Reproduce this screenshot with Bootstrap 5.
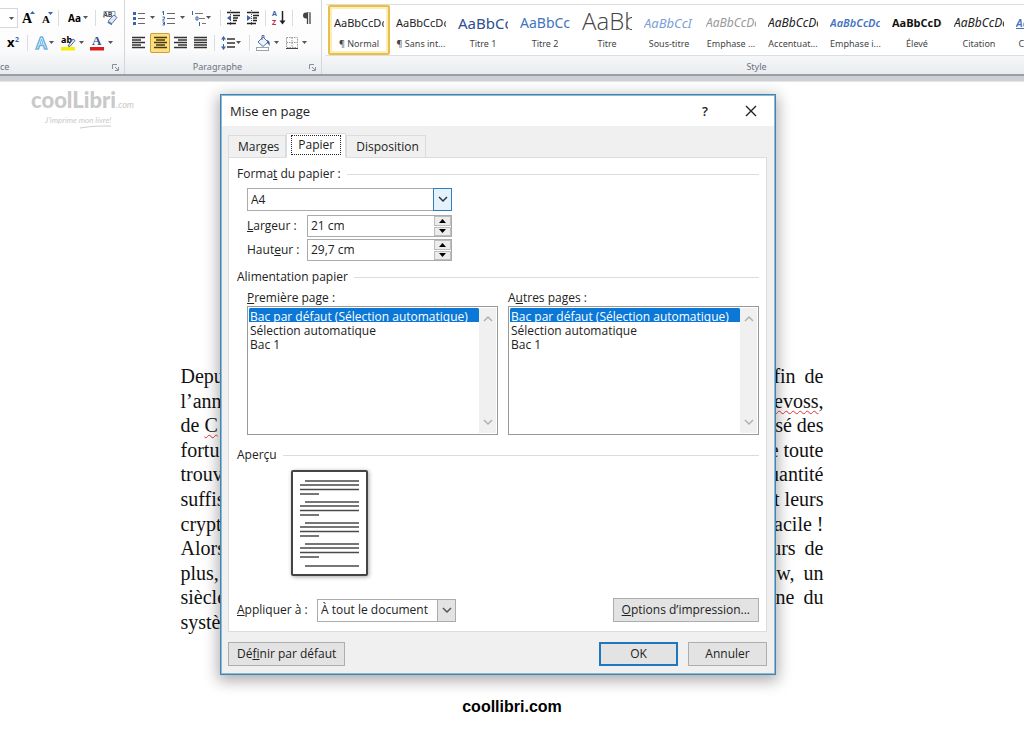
<!DOCTYPE html>
<html lang="fr">
<head>
<meta charset="utf-8">
<meta name="viewport" content="width=device-width, initial-scale=1">
<title>Mise en page</title>
<link href="https://cdn.jsdelivr.net/npm/bootstrap@5.3.0/dist/css/bootstrap.min.css" rel="stylesheet">
<style>
  body { font: 12px/16px "Noto Sans", "Open Sans", sans-serif; color: #222; background: #fff; }
  button, input, select { font: inherit; color: inherit; }

  /* Ribbon */
  .ribbon { background: linear-gradient(#fff 0, #fbfbfc 50px, #e9ebee); border-bottom: 2px solid #9b9fa5; box-shadow: 0 5px 0 #cdd1d6, 0 6px 0 #e4e6e8; }
  .rgroup { border-right: 1px solid #d3d6da; padding: 8px 5px 0 5px; }
  .rgroup.cut { padding-left: 0; width: 125px; }
  .rgroup.para { width: 197px; }
  .tools { height: 20px; gap: 4px; }
  .tools + .tools { margin-top: 5px; }
  .tool { padding: 0; border: 0; background: none; line-height: 0; flex: none; }
  .tool svg, .mini { display: block; }
  .tool.active { background: #ffdf7c; box-shadow: inset 0 0 0 1px #c9a03f; border-radius: 2px; }
  .rule-v { width: 1px; height: 16px; background: #d9dce0; flex: none; }
  .fontbox { width: 18px; height: 20px; border: 1px solid #d5d8dc; border-left: 0; background: #fff; }
  .glabel { font-size: 9px; line-height: 14px; color: #6b7280; margin-top: 7px; }
  .glabel.styles { padding-left: 163px; }
  .gallery { border-top: 1px solid #dcdee1; border-bottom: 1px solid #dcdee1; background: #fff; margin-top: 4px; padding-left: 2px; height: 52px; }
  .tile { width: 62px; height: 50px; padding: 0 4px; border: 2px solid transparent; background: none; flex: none; }
  .tile.active { border-color: #e8bf4a; border-radius: 2px; box-shadow: inset 0 0 0 2px #fdeeb5; }
  .tile .sample { display: block; height: 26px; line-height: 28px; font-size: 11px; overflow: hidden; white-space: nowrap; text-align: left; color: #222; }
  .tile .cap { display: block; font-size: 9px; line-height: 17px; white-space: nowrap; color: #444; }
  .tile .s-h1 { font-size: 15px; color: #2f4f8f; }
  .tile .s-h2 { font-size: 14px; color: #4374c0; }
  .tile .s-title { font-size: 24px; font-weight: 300; font-family: "Open Sans", sans-serif; color: #444; line-height: 24px; }
  .tile .s-sub { font-size: 13px; font-style: italic; color: #7ba0d6; }
  .tile .s-it { font-size: 12px; font-style: italic; }
  .tile .s-pale { font-size: 12px; font-style: italic; color: #999; }
  .tile .s-int { font-style: italic; font-weight: 600; color: #4374c0; }
  .tile .s-strong { font-size: 11px; font-weight: 700; font-family: "Open Sans", sans-serif; color: #111; }

  /* Document, logo and dialog share one grid cell */
  .stage { display: grid; margin-top: 5px; }
  .stage > * { grid-area: 1 / 1; }
  .brand { padding: 8px 0 0 31px; color: #c9c9c9; line-height: 22px; align-self: start; justify-self: start; }
  .brand .name { font: 900 22px/22px Lato, sans-serif; }
  .brand .com { font: italic 9px/10px Lato, sans-serif; }
  .brand .tag { font: italic 8px/10px Lato, sans-serif; padding-left: 14px; }
  .brand svg { margin-left: 48px; }
  .doc { width: min(643px, 100%); height: 270px; margin: 283px 20px 0 0; justify-self: center; font: 20px/24px "Liberation Serif", serif; color: #111; }
  .doc .typo { text-decoration: underline wavy #d33 1px; text-underline-offset: 2px; }
  .doc .wide { gap: 9px; }

  .dlg { font-family: "Open Sans", "Noto Sans", sans-serif; width: min(556px, 100%); margin: 13px 28px 0 0; justify-self: center; background: #f0f0f0; border: 1px solid #3f87b0; outline: 1px solid #8fb9d2; outline-offset: -2px; box-shadow: 0 4px 14px 2px rgba(0,0,0,.32); position: relative; }
  .dlg-title { background: #fff; margin: 1px; height: 30px; padding: 0 16px 0 8px; font-size: 13px; }
  .dlg-title button { border: 0; background: none; padding: 0; width: 14px; height: 16px; font-weight: 600; line-height: 16px; }
  .dlg-body { padding: 6px 8px 8px 7px; }
  .dlg .nav-tabs { border: 0; align-items: flex-end; margin-bottom: -1px; position: relative; }
  .dlg .nav-tabs .nav-link { border: 1px solid #dcdcdc; border-radius: 0; color: inherit; background: #f0f0f0; padding: 2px 6px 2px 9px; margin: 0; line-height: 17px; }
  .dlg .nav-tabs .nav-link.active { background: #fff; border-bottom-color: #fff; padding: 2px 5px 3px; }
  .dlg .nav-tabs .nav-link.active span { display: block; outline: 1px dotted #222; padding: 0 6px; line-height: 18px; }
  .pane { background: #fff; border: 1px solid #dcdcdc; padding: 8px 7px 9px 8px; }
  .legendrow { gap: 6px; line-height: 16px; }
  .legendrow::after { content: ""; flex: 1; border-top: 1px solid #dcdcdc; }
  .inset { margin-left: 10px; }
  .pick { position: relative; }
  .pick select { appearance: none; width: 100%; height: 23px; border: 1px solid #ababab; border-radius: 0; background: #fff; padding: 0 26px 0 3px; }
  .pick .arrow { position: absolute; right: 0; top: 0; width: 19px; height: 23px; border: 1px solid #ababab; background: #e3e3e3; pointer-events: none; display: grid; place-items: center; }
  .pick .arrow.hot { background: #e3f2fc; border: 1px solid #2f7fb8; }
  .format { margin-top: 6px; }
  .size { width: 205px; }
  .size label { width: 60px; }
  .spin { flex: 1; height: 22px; border: 1px solid #ababab; background: #fff; }
  .spin input { width: 100%; min-width: 0; border: 0; padding: 0 3px; background: none; }
  .spin .steps { width: 17px; flex: none; display: grid; gap: 1px; }
  .spin .steps button { padding: 0; border: 1px solid #bdbdbd; background: #ececec; display: grid; place-items: center; line-height: 0; min-height: 0; }
  .row2 { margin-top: 2px; }
  .trays { gap: 10px; margin-top: 5px; }
  .trays > div { flex: 1; min-width: 0; }
  .listwrap { border: 1px solid #999; height: 129px; padding: 1px; background: #fff; }
  .listwrap select { flex: 1; min-width: 0; border: 0; padding: 0; overflow: hidden; outline: 0; background: #fff; height: 125px; }
  .listwrap option { padding: 0 1px; min-height: 14px; line-height: 14px; height: 14px; }
  .listwrap option:checked { background: #0b78d7 linear-gradient(#0b78d7, #0b78d7); color: #fff; -webkit-text-fill-color: #fff; }
  .track { width: 17px; background: #f0f0f0; padding: 7px 0; }
  .paper { display: block; margin: 6px 0 0 53px; filter: drop-shadow(1px 1px 2px rgba(0,0,0,.35)); }
  .applyrow { margin-top: 21px; }
  .applyrow label { width: 80px; }
  .applyrow .pick { width: 139px; }
  .dbtn { border: 1px solid #adadad; border-radius: 0; background: #e3e3e3; height: 24px; padding: 0 8px; line-height: 20px; }
  .dbtn.main { border: 2px solid #1f78bd; }
  .dbtn.fixed { width: 79px; }
  .actions { margin-top: 10px; }
  .actions .gap-btn { gap: 10px; }
  .site { font: bold 16px/24px "Liberation Sans", Arial, sans-serif; color: #000; margin-top: 20px; }
</style>
</head>
<body>
<svg width="0" height="0" class="position-absolute" aria-hidden="true">
  <defs>
    <path id="dd" d="M0 0h5L2.500 3z" fill="#555"/>
    <g id="chev"><path d="M1 1l4 4 4-4" fill="none" stroke="currentColor" stroke-width="1.500"/></g>
  </defs>
</svg>

<header class="ribbon d-flex overflow-hidden">
  <div class="rgroup cut flex-shrink-0">
    <div class="tools d-flex align-items-center">
      <button class="tool fontbox" aria-label="Taille"><svg width="17" height="18"><use href="#dd" x="9" y="8"/></svg></button>
      <button class="tool" aria-label="Agrandir"><svg width="14" height="20"><text x="0" y="15" font-family="Liberation Serif" font-weight="bold" font-size="14">A</text><path d="M8 6l2.500-3L13 6z" fill="#3c64a8"/></svg></button>
      <button class="tool" aria-label="Réduire"><svg width="14" height="20"><text x="2" y="15" font-family="Liberation Serif" font-weight="bold" font-size="11">A</text><path d="M8 4h5l-2.500 3z" fill="#3c64a8"/></svg></button>
      <span class="rule-v"></span>
      <button class="tool" aria-label="Casse"><svg width="28" height="20"><text x="5" y="14" font-family="Noto Sans" font-weight="bold" font-size="10">Aa</text><use href="#dd" x="20" y="8"/></svg></button>
      <span class="rule-v"></span>
      <button class="tool" aria-label="Effacer la mise en forme"><svg width="20" height="20"><text x="3" y="9" font-family="Noto Sans" font-weight="bold" font-size="7" fill="#444">AB</text><path d="M4 10V3.500h11v5" fill="none" stroke="#8e9bb5"/><path d="M9 12l5-5 3 2.500-5 6-4-1z" fill="#dfe8f6" stroke="#5b79ad"/><path d="M8 14l4 2.500" stroke="#5b79ad" stroke-width="1.500"/></svg></button>
    </div>
    <div class="tools d-flex align-items-center ps-1">
      <button class="tool" aria-label="Exposant"><svg width="19" height="20"><text x="3" y="14" font-family="Noto Sans" font-weight="bold" font-size="13">x</text><text x="11" y="9" font-family="Noto Sans" font-weight="bold" font-size="7" fill="#3c64a8">2</text></svg></button>
      <span class="rule-v"></span>
      <button class="tool" aria-label="Effets de texte"><svg width="24" height="20"><path d="M4 16L8.500 4h2L15 16h-2.500l-1-3.500h-4l-1 3.500z" fill="#eaf5fd" stroke="#6fb2df" stroke-width="1.500"/><path d="M8 11l1.500-4.500L11 11z" fill="#fff" stroke="#6fb2df"/><use href="#dd" x="17" y="8"/></svg></button>
      <button class="tool" aria-label="Surlignage"><svg width="26" height="20"><rect x="1" y="14" width="14" height="3.500" fill="#f6f000"/><text x="1" y="10" font-family="Noto Sans" font-weight="bold" font-size="9">ab</text><path d="M8 13l5-7 2 1.500-5 6z" fill="#e9eef7" stroke="#4a6aa5"/><use href="#dd" x="19" y="8"/></svg></button>
      <button class="tool" aria-label="Couleur de police"><svg width="24" height="20"><rect x="0" y="14" width="14" height="3.500" fill="#e11b1b"/><text x="2" y="12" font-family="Liberation Serif" font-weight="bold" font-size="13" fill="#2e4f8f">A</text><use href="#dd" x="18" y="8"/></svg></button>
    </div>
    <div class="glabel d-flex align-items-center justify-content-between"><span>ce</span><svg width="7" height="7" fill="none" stroke="#8a9099"><path d="M.5 5V.5H5M3 3l3 3M6.500 3v3.500H3"/></svg></div>
  </div>

  <div class="rgroup para flex-shrink-0">
    <div class="tools d-flex align-items-center">
      <button class="tool" aria-label="Puces"><svg width="26" height="20"><path d="M8 5.500h7M8 10.500h7M8 15.500h7" stroke="#666"/><path d="M3 4h3v3H3zM3 9h3v3H3zM3 14h3v3H3z" fill="#3c64a8"/><use href="#dd" x="20" y="8"/></svg></button>
      <button class="tool" aria-label="Numérotation"><svg width="26" height="20"><path d="M7 5.500h8M7 10.500h8M7 15.500h8" stroke="#666"/><path d="M3.500 3v4M2 4h1M2.500 9h2v1.500l-2 1.500h2M2.500 14h2v3h-2M3 15.500h1" stroke="#3c64a8" fill="none"/><use href="#dd" x="20" y="8"/></svg></button>
      <button class="tool" aria-label="Liste à plusieurs niveaux"><svg width="26" height="20"><path d="M5 5.500h8M9 10.500h6M12 15.500h4" stroke="#777"/><path d="M2.500 3v4M6 9h2v3H6zM9.500 14v4" stroke="#3c64a8" fill="none"/><use href="#dd" x="16" y="8"/></svg></button>
      <span class="rule-v"></span>
      <button class="tool" aria-label="Diminuer le retrait"><svg width="16" height="20"><path d="M2 4.500h13M8 7.500h7M8 10h5M8 12.500h4M2 15.500h9" stroke="#222" stroke-width="1.500"/><path d="M6 7v6L2 10z" fill="#3c64a8"/><path d="M5.500 2v15" stroke="#555" stroke-dasharray="1 1"/></svg></button>
      <button class="tool" aria-label="Augmenter le retrait"><svg width="16" height="20"><path d="M2 4.500h12M8 7.500h6M8 10h4M8 12.500h4M2 15.500h9" stroke="#222" stroke-width="1.500"/><path d="M2 7v6l4-3z" fill="#3c64a8"/><path d="M6.500 2v15" stroke="#555" stroke-dasharray="1 1"/></svg></button>
      <span class="rule-v"></span>
      <button class="tool" aria-label="Trier"><svg width="18" height="20"><text x="2" y="8" font-family="Noto Sans" font-weight="bold" font-size="7" fill="#3c64a8">A</text><text x="2" y="17" font-family="Noto Sans" font-weight="bold" font-size="7" fill="#b03048">Z</text><path d="M12.500 3v11" stroke="#222" stroke-width="1.500"/><path d="M9.500 12.500h6l-3 4z" fill="#222"/></svg></button>
      <span class="rule-v"></span>
      <button class="tool" aria-label="Afficher tout"><svg width="20" height="20"><path d="M14.500 4.500H9a3 3 0 0 0 0 6h1.500V5z" fill="#444"/><path d="M10.500 4.500V16M13 4.500V16" stroke="#444" stroke-width="1.300"/></svg></button>
    </div>
    <div class="tools d-flex align-items-center">
      <div class="btn-group">
        <button class="tool" aria-label="Aligner à gauche"><svg width="20" height="20"><path d="M2 4.500h13M2 7h9M2 9.500h13M2 12h9M2 14.500h13" stroke="#333" stroke-width="1.400"/></svg></button>
        <button class="tool active" aria-label="Centrer"><svg width="20" height="20"><path d="M4 4.500h13M6 7h9M4 9.500h13M6 12h9M4 14.500h13" stroke="#4a3a10" stroke-width="1.400"/></svg></button>
        <button class="tool" aria-label="Aligner à droite"><svg width="20" height="20"><path d="M4 4.500h13M8 7h9M4 9.500h13M8 12h9M4 14.500h13" stroke="#333" stroke-width="1.400"/></svg></button>
        <button class="tool" aria-label="Justifier"><svg width="20" height="20"><path d="M4 4.500h13M4 7h13M4 9.500h13M4 12h13M4 14.500h13" stroke="#333" stroke-width="1.400"/></svg></button>
      </div>
      <span class="rule-v"></span>
      <button class="tool" aria-label="Interligne"><svg width="26" height="20"><path d="M8 6h8M8 10h8M8 14h8" stroke="#333" stroke-width="1.500"/><path d="M4.500 4v4M4.500 11v4" stroke="#3c64a8"/><path d="M2 6.500h5L4.500 3zM2 13.500h5L4.500 17z" fill="#3c64a8"/><use href="#dd" x="17" y="8"/></svg></button>
      <span class="rule-v"></span>
      <button class="tool" aria-label="Trame de fond"><svg width="26" height="20"><rect x="2.500" y="14.500" width="12" height="3" fill="#fff" stroke="#9aa3b2"/><path d="M4 9l5-5 5 5-5 4.500z" fill="#eef3fa" stroke="#56719f"/><path d="M8 7V2.500h2V5" fill="none" stroke="#56719f"/><path d="M13 7c3 1 3 3 2.500 6-1-2-2-3-2.500-3z" fill="#3c64a8"/><use href="#dd" x="20" y="8"/></svg></button>
      <button class="tool" aria-label="Bordures"><svg width="24" height="20"><path d="M2.500 4.500h11v10h-11zM8 4.500v10M2.500 9.500h11" fill="none" stroke="#999" stroke-dasharray="1.500 1"/><path d="M2 15.500h12" stroke="#444"/><use href="#dd" x="18" y="8"/></svg></button>
    </div>
    <div class="glabel d-flex align-items-center"><span class="flex-grow-1 text-center pe-1">Paragraphe</span><svg width="7" height="7" fill="none" stroke="#8a9099"><path d="M.5 5V.5H5M3 3l3 3M6.500 3v3.500H3"/></svg></div>
  </div>

  <div class="flex-grow-1 overflow-hidden ps-1">
    <div class="gallery d-flex overflow-hidden">
      <button class="tile active"><span class="sample">AaBbCcDc</span><span class="cap">¶ Normal</span></button>
      <button class="tile"><span class="sample">AaBbCcDc</span><span class="cap">¶ Sans int...</span></button>
      <button class="tile"><span class="sample s-h1">AaBbCc</span><span class="cap">Titre 1</span></button>
      <button class="tile"><span class="sample s-h2">AaBbCc</span><span class="cap">Titre 2</span></button>
      <button class="tile"><span class="sample s-title">AaBb</span><span class="cap">Titre</span></button>
      <button class="tile"><span class="sample s-sub">AaBbCcI</span><span class="cap">Sous-titre</span></button>
      <button class="tile"><span class="sample s-pale">AaBbCcDc</span><span class="cap">Emphase ...</span></button>
      <button class="tile"><span class="sample s-it">AaBbCcDc</span><span class="cap">Accentuat...</span></button>
      <button class="tile"><span class="sample s-int">AaBbCcDc</span><span class="cap">Emphase i...</span></button>
      <button class="tile"><span class="sample s-strong">AaBbCcDc</span><span class="cap">Élevé</span></button>
      <button class="tile"><span class="sample s-it">AaBbCcDc</span><span class="cap">Citation</span></button>
      <button class="tile"><span class="sample s-int text-decoration-underline">AaBbCcDc</span><span class="cap">Citation i...</span></button>
    </div>
    <div class="glabel styles text-center mt-1">Style</div>
  </div>
</header>

<main class="stage">
  <div class="brand">
    <div><span class="name">coolLibri</span><span class="com">.com</span></div>
    <div class="tag">J’imprime mon livre!</div>
    <svg width="34" height="4" class="d-block"><path d="M1 3C12 1 22 1 32 1" fill="none" stroke="#ccc"/></svg>
  </div>

  <article class="doc d-flex flex-column justify-content-between">
    <div class="d-flex justify-content-between"><span>Depu</span><span class="d-flex wide"><span>fin</span><span>de</span></span></div>
    <div class="d-flex justify-content-between"><span>l’ann</span><span><span class="typo">evoss</span>,</span></div>
    <div class="d-flex justify-content-between"><span>de <span class="typo">C</span></span><span>sé des</span></div>
    <div class="d-flex justify-content-between"><span>fortu</span><span>e toute</span></div>
    <div class="d-flex justify-content-between"><span>trouv</span><span>uantité</span></div>
    <div class="d-flex justify-content-between"><span>suffis</span><span>t leurs</span></div>
    <div class="d-flex justify-content-between"><span>crypt</span><span>acile !</span></div>
    <div class="d-flex justify-content-between"><span>Alors</span><span class="d-flex wide"><span>urs</span><span>de</span></span></div>
    <div class="d-flex justify-content-between"><span>plus,</span><span class="d-flex wide"><span>w,</span><span>un</span></span></div>
    <div class="d-flex justify-content-between"><span>siècle</span><span class="d-flex wide"><span>ne</span><span>du</span></span></div>
    <div><span>systè</span></div>
  </article>

  <section class="dlg" role="dialog" aria-labelledby="dlgTitle">
    <div class="dlg-title d-flex align-items-center">
      <span id="dlgTitle" class="me-auto">Mise en page</span>
      <button type="button" class="me-4" aria-label="Aide">?</button>
      <button type="button" class="ms-2" aria-label="Fermer"><svg class="mini" width="14" height="14"><path d="M2 2l10 10M12 2L2 12" stroke="#222" stroke-width="1.400"/></svg></button>
    </div>
    <div class="dlg-body">
      <ul class="nav nav-tabs" role="tablist">
        <li class="nav-item"><button class="nav-link" role="tab" type="button">Marges</button></li>
        <li class="nav-item"><button class="nav-link active" role="tab" type="button"><span>Papier</span></button></li>
        <li class="nav-item"><button class="nav-link" role="tab" type="button">Disposition</button></li>
      </ul>
      <div class="pane">
        <label class="legendrow d-flex align-items-center" for="format"><span>Forma<u>t</u> du papier :</span></label>
        <div class="inset size">
          <div class="pick format">
            <select id="format"><option>A4</option></select>
            <span class="arrow hot"><svg width="10" height="7" color="#333"><use href="#chev"/></svg></span>
          </div>
          <div class="d-flex align-items-center mt-1">
            <label for="larg"><u>L</u>argeur :</label>
            <div class="spin d-flex"><input id="larg" type="text" value="21 cm"><div class="steps"><button type="button" aria-label="Plus"><svg width="7" height="4"><path d="M0 4h7L3.500 0z"/></svg></button><button type="button" aria-label="Moins"><svg width="7" height="4"><path d="M0 0h7L3.500 4z"/></svg></button></div></div>
          </div>
          <div class="d-flex align-items-center row2">
            <label for="haut">Haut<u>e</u>ur :</label>
            <div class="spin d-flex"><input id="haut" type="text" value="29,7 cm"><div class="steps"><button type="button" aria-label="Plus"><svg width="7" height="4"><path d="M0 4h7L3.500 0z"/></svg></button><button type="button" aria-label="Moins"><svg width="7" height="4"><path d="M0 0h7L3.500 4z"/></svg></button></div></div>
          </div>
        </div>

        <div class="legendrow d-flex align-items-center mt-2"><span>Alimentation papier</span></div>
        <div class="inset trays d-flex">
          <div>
            <label for="tray1"><u>P</u>remière page :</label>
            <div class="listwrap d-flex">
              <select id="tray1" size="8"><option selected>Bac par défaut (Sélection automatique)</option><option>Sélection automatique</option><option>Bac 1</option></select>
              <div class="track d-flex flex-column justify-content-between align-items-center"><svg width="10" height="7" color="#b0b0b0"><path d="M1 6l4-4 4 4" fill="none" stroke="currentColor" stroke-width="1.500"/></svg><svg width="10" height="7" color="#b0b0b0"><use href="#chev"/></svg></div>
            </div>
          </div>
          <div>
            <label for="tray2">A<u>u</u>tres pages :</label>
            <div class="listwrap d-flex">
              <select id="tray2" size="8"><option selected>Bac par défaut (Sélection automatique)</option><option>Sélection automatique</option><option>Bac 1</option></select>
              <div class="track d-flex flex-column justify-content-between align-items-center"><svg width="10" height="7" color="#b0b0b0"><path d="M1 6l4-4 4 4" fill="none" stroke="currentColor" stroke-width="1.500"/></svg><svg width="10" height="7" color="#b0b0b0"><use href="#chev"/></svg></div>
            </div>
          </div>
        </div>

        <div class="legendrow d-flex align-items-center mt-2 pt-1"><span>Aperçu</span></div>
        <svg class="paper" width="78" height="108" role="img" aria-label="Aperçu de la page">
          <rect x="2" y="2" width="75" height="104" rx="1" fill="#fff" stroke="#444" stroke-width="2"/>
          <g stroke="#4a4a4a" stroke-width="1.600">
            <path id="pg" d="M15 12h54M10 16h59M10 20.500h59M10 25h19"/>
            <use href="#pg" y="21"/><use href="#pg" y="42"/><use href="#pg" y="63"/>
            <path d="M15 97h54"/>
          </g>
        </svg>
        <div class="d-flex align-items-center applyrow">
          <label for="apply"><u>A</u>ppliquer à :</label>
          <div class="pick me-auto">
            <select id="apply"><option>À tout le document</option></select>
            <span class="arrow"><svg width="10" height="7" color="#555"><use href="#chev"/></svg></span>
          </div>
          <button type="button" class="dbtn"><u>O</u>ptions d’impression...</button>
        </div>
      </div>
      <div class="d-flex actions">
        <button type="button" class="dbtn me-auto">Dé<u>f</u>inir par défaut</button>
        <div class="d-flex gap-btn">
          <button type="button" class="dbtn main fixed">OK</button>
          <button type="button" class="dbtn fixed">Annuler</button>
        </div>
      </div>
    </div>
  </section>
</main>
<footer class="site text-center">coollibri.com</footer>
<script src="https://cdn.jsdelivr.net/npm/bootstrap@5.3.0/dist/js/bootstrap.bundle.min.js"></script>
</body>
</html>
